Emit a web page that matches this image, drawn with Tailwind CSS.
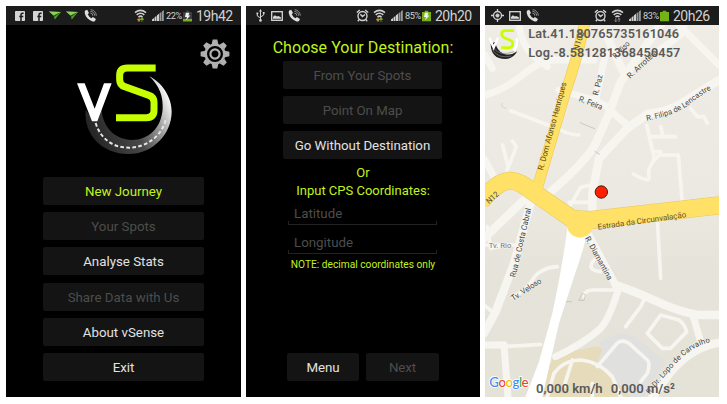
<!DOCTYPE html>
<html lang="en">
<head>
<meta charset="utf-8">
<title>vSense</title>
<script src="https://cdn.jsdelivr.net/npm/@tailwindcss/browser@4"></script>
</head>
<body class="bg-white w-[727px] h-[404px] overflow-hidden font-[Roboto,sans-serif]">
<svg class="hidden">
  <defs>
    <symbol id="fb" viewBox="0 0 10 10"><rect width="10" height="10" rx=".8" fill="#d4d4d4"/><path d="M8.6 2.2H7.5Q6 2.2 6 3.8V10M4.3 5.4h4" fill="none" stroke="#1c1c1c" stroke-width="1.5"/></symbol>
    <symbol id="plane" viewBox="0 0 12 9"><path d="M0 .6 12 1 5.8 8.6 4.6 4.6z" fill="#4ea02c"/><path d="M0 .6 12 1 4.6 4.6z" fill="#8ed05c"/><path d="M4.6 4.6 12 1 5.2 5.9z" fill="#245a12"/></symbol>
    <symbol id="call" viewBox="0 0 13 13"><path d="M1.2 1.6 3.2.8 5 4 3.7 5.2q1.2 2.6 3.8 4.1l1.4-1.2 3 1.9-.9 2q-1.3.9-3 .3Q1.9 9.600.8 4.200.5 2.500 1.200 1.600z" fill="#dedede"/><path d="M6.400 4.200a2.500 2.500 0 0 1 2.500 2.500M6.400 2.400a4.300 4.300 0 0 1 4.300 4.300M6.600.7a6 6 0 0 1 5.700 6" fill="none" stroke="#999" stroke-width=".9"/></symbol>
    <symbol id="wifi" viewBox="0 0 13 13"><path d="M1 3.600Q6.500-.9 12 3.600M2.700 5.900Q6.500 2.600 10.300 5.900M4.500 8Q6.500 6.200 8.500 8" fill="none" stroke="#cfcfcf" stroke-width="1.600"/></symbol>
    <symbol id="arrows" viewBox="0 0 7 5"><path d="M2 0v3M.4 2.300 2 4.600l1.600-2.300z" stroke="#d8963a" fill="#d8963a" stroke-width=".7"/><path d="M5 5V2M3.500 2.500 5 .2l1.600 2.300z" stroke="#76b82a" fill="#76b82a" stroke-width=".7"/></symbol>
    <symbol id="signal" viewBox="0 0 12 11"><path d="M0 11V9.500L2 8v3zM2.500 11V7.500l2-1.700V11zM5 11V5.300L7 3.700V11z" fill="#d0d0d0"/><path d="M7.500 11V3.300l1.900-1.400V11zM9.900 11V1.400L11.800 0v11z" fill="#9a9a9a"/></symbol>
    <symbol id="alarm" viewBox="0 0 13 13"><circle cx="6.500" cy="7" r="4.500" fill="none" stroke="#d0d0d0" stroke-width="1.400"/><path d="M.8 3.600 3.800.9M12.200 3.600 9.200.9M3.200 10.500l-1.400 1.700M9.800 10.500l1.400 1.700M4.300 5.300 6.500 7.600 9 5.500" fill="none" stroke="#d0d0d0" stroke-width="1.400"/></symbol>
    <symbol id="picture" viewBox="0 0 12 10"><rect x=".7" y=".7" width="10.600" height="8.600" fill="#1c1c1c" stroke="#d8d8d8" stroke-width="1.300"/><path d="M2 7.800V6l1.800-1.700L6 5.600l1.500-.6L10 6.600v1.200z" fill="#d8d8d8"/></symbol>
    <symbol id="battery" viewBox="0 0 10 12"><path d="M3 0h4v1.500h3V12H0V1.500h3z" fill="#74b216"/></symbol>
    <symbol id="bolt" viewBox="0 0 10 12"><path d="M3.200 2.500h4L6 5.400h2.200L3.400 10.600l1-3.600H2.200z" fill="#f2f2f2"/></symbol>
  </defs>
</svg>
<main class="flex gap-[5px] pl-[6px] pt-[6px]">

  <section class="w-[235px] h-[391px] bg-black flex flex-col">
    <header class="h-[19px] shrink-0 bg-[#1c1c1c] flex items-center text-[#d2d2d2]">
      <svg class="ml-[9px] mt-[1px] size-[10px]"><use href="#fb"/></svg>
      <svg class="ml-[8px] mt-[1px] size-[10px]"><use href="#fb"/></svg>
      <svg class="ml-[6px] w-[12px] h-[9px]"><use href="#plane"/></svg>
      <svg class="ml-[5px] w-[12px] h-[9px]"><use href="#plane"/></svg>
      <svg class="ml-[6px] size-[13px]"><use href="#call"/></svg>
      <svg class="ml-[37px] size-[13px]" viewBox="0 0 13 13"><use href="#wifi"/><use href="#arrows" x="3" y="8" width="7" height="5"/></svg>
      <svg class="ml-[5px] w-[12px] h-[11px]"><use href="#signal"/></svg>
      <span class="ml-[2px] w-[17px] pt-px text-[9.2px] tracking-[-0.45px] whitespace-nowrap">22%</span>
      <svg class="w-[9px] h-[12px]" viewBox="0 0 10 12"><path d="M3 0h4v1.500h3V12H0V1.500h3z" fill="#3d3d3d"/><path d="M0 9.300h10V12H0z" fill="#74b216"/><use href="#bolt"/></svg>
      <span class="ml-[4px] text-[14px] leading-[18px] tracking-[-0.500px] whitespace-nowrap">19h42</span>
    </header>
    <div class="relative h-[152px] shrink-0">
      <svg class="absolute left-[194px] top-[14px] size-[30px]" viewBox="-15 -15 30 30" fill="none" stroke="#b0b0b0">
        <circle r="9.300" stroke-width="2.600"/><circle r="4.600" stroke-width="2.200"/>
        <g fill="#b0b0b0" stroke="none"><path id="tooth" d="M-3.300-10 -2.300-14.400H2.300L3.300-10z"/><use href="#tooth" transform="rotate(45)"/><use href="#tooth" transform="rotate(90)"/><use href="#tooth" transform="rotate(135)"/><use href="#tooth" transform="rotate(180)"/><use href="#tooth" transform="rotate(225)"/><use href="#tooth" transform="rotate(270)"/><use href="#tooth" transform="rotate(315)"/></g>
      </svg>
      <svg class="absolute left-[54px] top-[25px] w-[130px] h-[115px]" viewBox="0 0 390 345">
        <defs><linearGradient id="road" x1="0" y1=".7" x2="1" y2=".3"><stop offset="0" stop-color="#222"/><stop offset=".5" stop-color="#484848"/><stop offset=".75" stop-color="#999"/><stop offset="1" stop-color="#fff"/></linearGradient></defs>
        <path d="M77 180C70 255 128 312 205 312 280 312 335 250 335 185 335 140 305 97 268 79 300 110 309 140 308 175 305 235 265 270 215 270 160 268 122 225 125 165L100 210z" fill="url(#road)"/>
        <path d="M107 219C122 268 160 293 207 293 262 293 308 255 318 205" fill="none" stroke="#e6e6e6" stroke-width="6" stroke-dasharray="11 7"/>
        <path d="M51 100H74L104 176 132 100H155L112 214H96z" fill="#fff"/>
        <path d="M287 54H202Q179 54 179 76V89Q179 105 194 110L267 136Q282 141 282 157V181Q282 203 260 203H168" fill="none" stroke="#c8ff00" stroke-width="21"/>
      </svg>
    </div>
    <nav class="flex flex-col gap-[7.200px] pl-[37px] text-[13.300px] text-[#e2e2e2]">
      <div class="w-[161px] h-[28px] rounded-[2px] bg-[#141414] flex items-center justify-center pt-[2px] text-[#c0f31c]">New Journey</div>
      <div class="w-[161px] h-[28px] rounded-[2px] bg-[#141414] flex items-center justify-center pt-[2px] text-[#4d4d4d]">Your Spots</div>
      <div class="w-[161px] h-[28px] rounded-[2px] bg-[#141414] flex items-center justify-center pt-[2px]">Analyse Stats</div>
      <div class="w-[161px] h-[28px] rounded-[2px] bg-[#141414] flex items-center justify-center pt-[2px] text-[#4d4d4d]">Share Data with Us</div>
      <div class="w-[161px] h-[28px] rounded-[2px] bg-[#141414] flex items-center justify-center pt-[2px]">About vSense</div>
      <div class="w-[161px] h-[28px] rounded-[2px] bg-[#141414] flex items-center justify-center pt-[2px]">Exit</div>
    </nav>
  </section>

  <section class="w-[234px] h-[391px] bg-black flex flex-col">
    <header class="h-[19px] shrink-0 bg-[#1c1c1c] flex items-center text-[#d2d2d2]">
      <svg class="ml-[10px] w-[9px] h-[13px]" viewBox="0 0 9 13" fill="none" stroke="#d5d5d5"><path d="M4.500 1.500v9.500M4.500 9 1.300 7V4.500M4.500 8 7.700 6V3.500"/><path d="M3 2.500 4.500 0 6 2.500zM.5 3.500h1.800v1.800H.5zM6.800 3h1.800v1.800H6.800z" fill="#d5d5d5" stroke="none"/><circle cx="4.500" cy="11.400" r="1.300" fill="#d5d5d5" stroke="none"/></svg>
      <svg class="ml-[6px] w-[12px] h-[10px]"><use href="#picture"/></svg>
      <svg class="ml-[5px] size-[13px]"><use href="#call"/></svg>
      <svg class="ml-[55px] size-[13px]"><use href="#alarm"/></svg>
      <svg class="ml-[4px] size-[13px]" viewBox="0 0 13 13"><use href="#wifi"/><use href="#arrows" x="3" y="8" width="7" height="5"/></svg>
      <svg class="ml-[5px] w-[12px] h-[11px]"><use href="#signal"/></svg>
      <span class="ml-[2px] w-[17px] pt-px text-[9.200px] tracking-[-0.450px] whitespace-nowrap">85%</span>
      <svg class="w-[9px] h-[12px]" viewBox="0 0 10 12"><use href="#battery"/><use href="#bolt"/></svg>
      <span class="ml-[4px] text-[14px] leading-[18px] tracking-[-0.500px] whitespace-nowrap">20h20</span>
    </header>
    <h1 class="mt-[13px] h-[23px] leading-[20px] text-center text-[16px] tracking-[0.050px] text-[#c0f31c] whitespace-nowrap">Choose Your Destination:</h1>
    <div class="flex flex-col gap-[7px] pl-[37px] text-[13.300px] tracking-[-0.050px]">
      <div class="w-[159px] h-[28px] rounded-[2px] bg-[#141414] flex items-center justify-center pt-[2px] text-[#4d4d4d]">From Your Spots</div>
      <div class="w-[159px] h-[28px] rounded-[2px] bg-[#141414] flex items-center justify-center pt-[2px] text-[#4d4d4d]">Point On Map</div>
      <div class="w-[159px] h-[28px] rounded-[2px] bg-[#141414] flex items-center justify-center pt-[2px] text-[#e2e2e2]">Go Without Destination</div>
    </div>
    <div class="mt-[5px] text-center text-[13px] leading-[18px] text-[#c0f31c]">
      <p>Or</p>
      <p>Input CPS Coordinates:</p>
    </div>
    <div class="ml-[42px] w-[149px] text-[13.300px] text-[#4d4d4d]">
      <div class="h-[25px] pl-[6px] leading-[28px] bg-[linear-gradient(#222,#222),linear-gradient(#222,#222)] bg-[size:1px_3px] bg-[position:left_bottom,right_bottom] bg-no-repeat border-b border-[#222]">Latitude</div>
      <div class="h-[29px] pl-[6px] leading-[36px] bg-[linear-gradient(#222,#222),linear-gradient(#222,#222)] bg-[size:1px_3px] bg-[position:left_bottom,right_bottom] bg-no-repeat border-b border-[#222]">Longitude</div>
    </div>
    <p class="mt-[3px] text-center text-[10.200px] leading-[15px] text-[#c0f31c] whitespace-nowrap">NOTE: decimal coordinates only</p>
    <div class="mt-auto mb-[16px] pl-[41px] flex gap-[7px] text-[13.300px] tracking-[-0.100px]">
      <div class="w-[72px] h-[28px] rounded-[2px] bg-[#141414] flex items-center justify-center pt-[2px] text-[#e2e2e2]">Menu</div>
      <div class="w-[73px] h-[28px] rounded-[2px] bg-[#141414] flex items-center justify-center pt-[2px] text-[#4d4d4d]">Next</div>
    </div>
  </section>

  <section class="w-[234px] h-[391px] flex flex-col">
    <header class="h-[19px] shrink-0 bg-[#1c1c1c] flex items-center text-[#d2d2d2]">
      <svg class="ml-[6px] size-[13px]" viewBox="0 0 13 13" fill="none" stroke="#d2d2d2"><circle cx="6.500" cy="6.500" r="4" stroke-width="1.300"/><circle cx="6.500" cy="6.500" r="1.600" fill="#d2d2d2"/><path d="M6.500 0v3M6.500 10v3M0 6.500h3M10 6.500h3" stroke-width="1.300"/></svg>
      <svg class="ml-[5px] w-[12px] h-[10px]"><use href="#picture"/></svg>
      <svg class="ml-[5px] size-[13px]"><use href="#call"/></svg>
      <svg class="ml-[55px] size-[13px]"><use href="#alarm"/></svg>
      <svg class="ml-[4px] size-[13px]" viewBox="0 0 13 13"><use href="#wifi"/><path d="M4.800 9v3.500M3.600 11.300l1.200 1.500L6 11.300M8 13V9.500M6.800 10.700 8 9.200l1.200 1.500" fill="none" stroke="#999" stroke-width=".8"/></svg>
      <svg class="ml-[5px] w-[12px] h-[11px]"><use href="#signal"/></svg>
      <span class="ml-[2px] w-[17px] pt-px text-[9.200px] tracking-[-0.450px] whitespace-nowrap">83%</span>
      <svg class="w-[9px] h-[12px]" viewBox="0 0 10 12"><use href="#battery"/></svg>
      <span class="ml-[4px] text-[14px] leading-[18px] tracking-[-0.500px] whitespace-nowrap">20h26</span>
    </header>
    <svg class="w-[234px] h-[372px] block" viewBox="3 75 702 1116" font-family="Roboto, sans-serif">
      <defs>
        <linearGradient id="land" x1="0" y1="0" x2="0" y2="1"><stop offset="0" stop-color="#eeece5"/><stop offset=".45" stop-color="#ebe9e1"/><stop offset=".65" stop-color="#e6e4da"/><stop offset="1" stop-color="#e5e2d8"/></linearGradient>
        <path id="filipa" d="M488 362Q565 348 610 318 650 285 690 264"/>
        <path id="lopo" d="M497 1184Q555 1110 598 1068 640 1034 682 1026"/>
      </defs>
      <rect x="3" y="75" width="702" height="1116" fill="url(#land)"/>
      <path d="M215 1065 330 1040Q358 1035 355 1060L340 1085 385 1140 470 1191H165L195 1100z" fill="#e6dbbb"/>
      <path d="M345 1025 410 996 455 1012 545 1085 500 1150 475 1191H440L340 1085 355 1050z" fill="#e0e0df"/>
      <g fill="none" stroke="#f7f5f0" stroke-linejoin="round" stroke-linecap="round">
        <g stroke-width="21">
          <path d="M3 285Q60 270 115 225T215 180H330"/>
          <path d="M3 165 25 205"/>
          <path d="M103 60Q110 130 145 165L190 200"/>
          <path d="M365 160 335 300"/>
          <path d="M225 270 330 300 380 325"/>
          <path d="M375 328 430 375"/>
          <path d="M570 60 705 195"/>
          <path d="M605 60 590 105 520 155"/>
          <path d="M60 1035 72 1191"/>
          <path d="M0 1035H60"/>
          <path d="M3 480 45 560"/>
          <path d="M625 940 650 1025"/>
          <path d="M310 695 395 855"/>
          <path d="M215 1070Q300 1030 350 985 380 950 405 860"/>
        </g>
        <g stroke-width="25">
          <path d="M365 100 415 210"/>
          <path d="M540 60 410 245 375 340 335 430Q310 480 195 580"/>
          <path d="M705 240 600 305Q555 335 490 342L430 385 345 475 325 580V655"/>
          <path d="M145 590 90 790 35 935 0 1000"/>
          <path d="M395 855Q455 875 520 905T645 945H705"/>
          <path d="M705 1028Q625 1040 560 1115L500 1200"/>
          <path d="M130 590 0 715"/>
        </g>
        <g stroke-width="11">
          <path d="M80 332 230 390Q250 403 285 405"/>
          <path d="M55 310Q48 320 65 325" stroke="#dcdad2" stroke-width="4"/>
          <path d="M65 530 72 500 56 435M72 505 97 440 85 423"/>
          <path d="M488 375 505 450Q515 475 503 492T495 530 448 522M505 410H575M537 410 530 380M515 455H530M505 488 525 465H583L595 610"/>
          <path d="M620 325 640 350H660L670 370"/>
          <path d="M245 640 290 562 320 555M255 607H320"/>
          <path d="M520 660 530 835"/>
          <path d="M0 735H90"/>
          <path d="M85 890Q125 875 145 840T220 800"/>
          <path d="M300 890Q300 870 330 870H390"/>
          <path d="M330 780Q305 810 350 815"/>
          <path d="M425 980 470 920 485 890"/>
          <path d="M530 945 585 960Q600 970 608 995L560 1045H535L490 1000z"/>
          <path d="M340 1100 395 1035Q410 1015 435 1030L490 1080Q500 1090 490 1120L470 1145"/>
          <path d="M190 1191 210 1120Q240 1080 290 1080 345 1085 385 1130L410 1191M265 1080 240 1160M325 1191V1150"/>
          <path d="M60 1040 170 1033"/>
          <path d="M45 740 20 745 10 680M0 915 25 935"/>
        </g>
        <g stroke-width="2" stroke="#bbb8ae"><path d="M288 368 332 386M333 454 347 463M245 905H262M285 900 295 880 305 885 300 900z"/></g>
      </g>
      <path d="M250 685 308 705Q292 770 275 815L225 970 175 1191H124L165 1085 205 940Q235 800 250 685z" fill="#fff"/>
      <g fill="none" stroke-linejoin="round">
        <g stroke="#eac65a">
          <path d="M304 60Q280 175 245 275L155 580" stroke-width="33"/>
          <path d="M-10 605Q35 548 75 542 105 540 150 578L265 657 320 660 715 615" stroke-width="54"/>
        </g>
        <circle cx="288" cy="674" r="39" fill="#ffe168"/>
        <g stroke="#ffe168">
          <path d="M304 60Q280 175 245 275L155 580" stroke-width="30"/>
          <path d="M-10 605Q35 548 75 542 105 540 150 578L265 657 320 660 715 615" stroke-width="51"/>
        </g>
      </g>
      <g fill="#444" font-size="24" stroke="#f7f5f0" stroke-width="3" paint-order="stroke" lengthAdjust="spacingAndGlyphs">
        <text transform="translate(283 153) rotate(-72)" textLength="58" lengthAdjust="spacingAndGlyphs" stroke="none">N105</text>
        <text transform="translate(177 512) rotate(-75)" textLength="272" lengthAdjust="spacingAndGlyphs" stroke="none" fill="#544817">R. Dom Afonso Henriques</text>
        <text transform="translate(342 287) rotate(-77)" textLength="62" lengthAdjust="spacingAndGlyphs">R. Paz</text>
        <text transform="translate(283 303) rotate(21)" textLength="74" lengthAdjust="spacingAndGlyphs">R. Feira</text>
        <text transform="translate(395 177) rotate(-45)" textLength="62" lengthAdjust="spacingAndGlyphs">R. Viso</text>
        <text transform="translate(438 237) rotate(-43)" textLength="114" lengthAdjust="spacingAndGlyphs">R. Arroteia</text>
        <text font-size="23"><textPath href="#filipa" textLength="218">R. Filipa de Lencastre</textPath></text>
        <text transform="translate(15 613) rotate(-42)" textLength="42" lengthAdjust="spacingAndGlyphs" stroke="none">N12</text>
        <text transform="translate(342 689) rotate(-8)" textLength="268" lengthAdjust="spacingAndGlyphs" stroke="none" fill="#66501c">Estrada da Circunvalação</text>
        <text transform="translate(94 833) rotate(-77)" textLength="212" lengthAdjust="spacingAndGlyphs">Rua de Costa Cabral</text>
        <text x="14" y="745" textLength="68" lengthAdjust="spacingAndGlyphs" fill="#777">Tv. Rio</text>
        <text transform="translate(88 903) rotate(-33)" textLength="103" lengthAdjust="spacingAndGlyphs">Tv. Veloso</text>
        <text transform="translate(302 715) rotate(61)" textLength="145" lengthAdjust="spacingAndGlyphs">R. Diamantina</text>
        <text font-size="23"><textPath href="#lopo" textLength="245">R. Dr. Lopo de Carvalho</textPath></text>
      </g>
      <circle cx="352" cy="576" r="18.500" fill="#ff2000" stroke="#4a1a12" stroke-width="3"/>
      <g transform="translate(7 85)">
        <path d="M13 47Q14 92 57 92 80 92 93 69 72 84 52 76 30 66 27 40z" fill="#222"/>
        <path d="M18 63Q35 93 75 83M22 60Q42 85 83 70" fill="none" stroke="#888" stroke-width="2"/>
        <path d="M9 28 22 58 35 28M91 28Q96 50 82 68" fill="none" stroke="#fff" stroke-width="7"/>
        <path d="M83 7H57Q46 7 46 18 46 25 54 28L72 36Q80 39 79 48 79 58 68 58H45" fill="none" stroke="#c8ff00" stroke-width="8"/>
      </g>
      <g fill="#5a5a5a" font-weight="600" font-size="38">
        <text x="133" y="115" textLength="452">Lat.41.180765735161046</text>
        <text x="133" y="170" textLength="456">Log.-8.581281368450457</text>
        <text x="156" y="1179" font-size="41" textLength="200" lengthAdjust="spacingAndGlyphs">0,000 km/h</text>
        <text x="380" y="1179" font-size="41" textLength="193" lengthAdjust="spacingAndGlyphs">0,000 m/s²</text>
      </g>
      <text x="16" y="1160" font-size="40" font-family="Lato, sans-serif" textLength="118" stroke="#fff" stroke-width="5" paint-order="stroke" font-weight="500"><tspan fill="#4285f4">G</tspan><tspan fill="#ea4335">o</tspan><tspan fill="#fbbc05">o</tspan><tspan fill="#4285f4">g</tspan><tspan fill="#34a853">l</tspan><tspan fill="#ea4335">e</tspan></text>
    </svg>
  </section>
</main>
</body>
</html>
